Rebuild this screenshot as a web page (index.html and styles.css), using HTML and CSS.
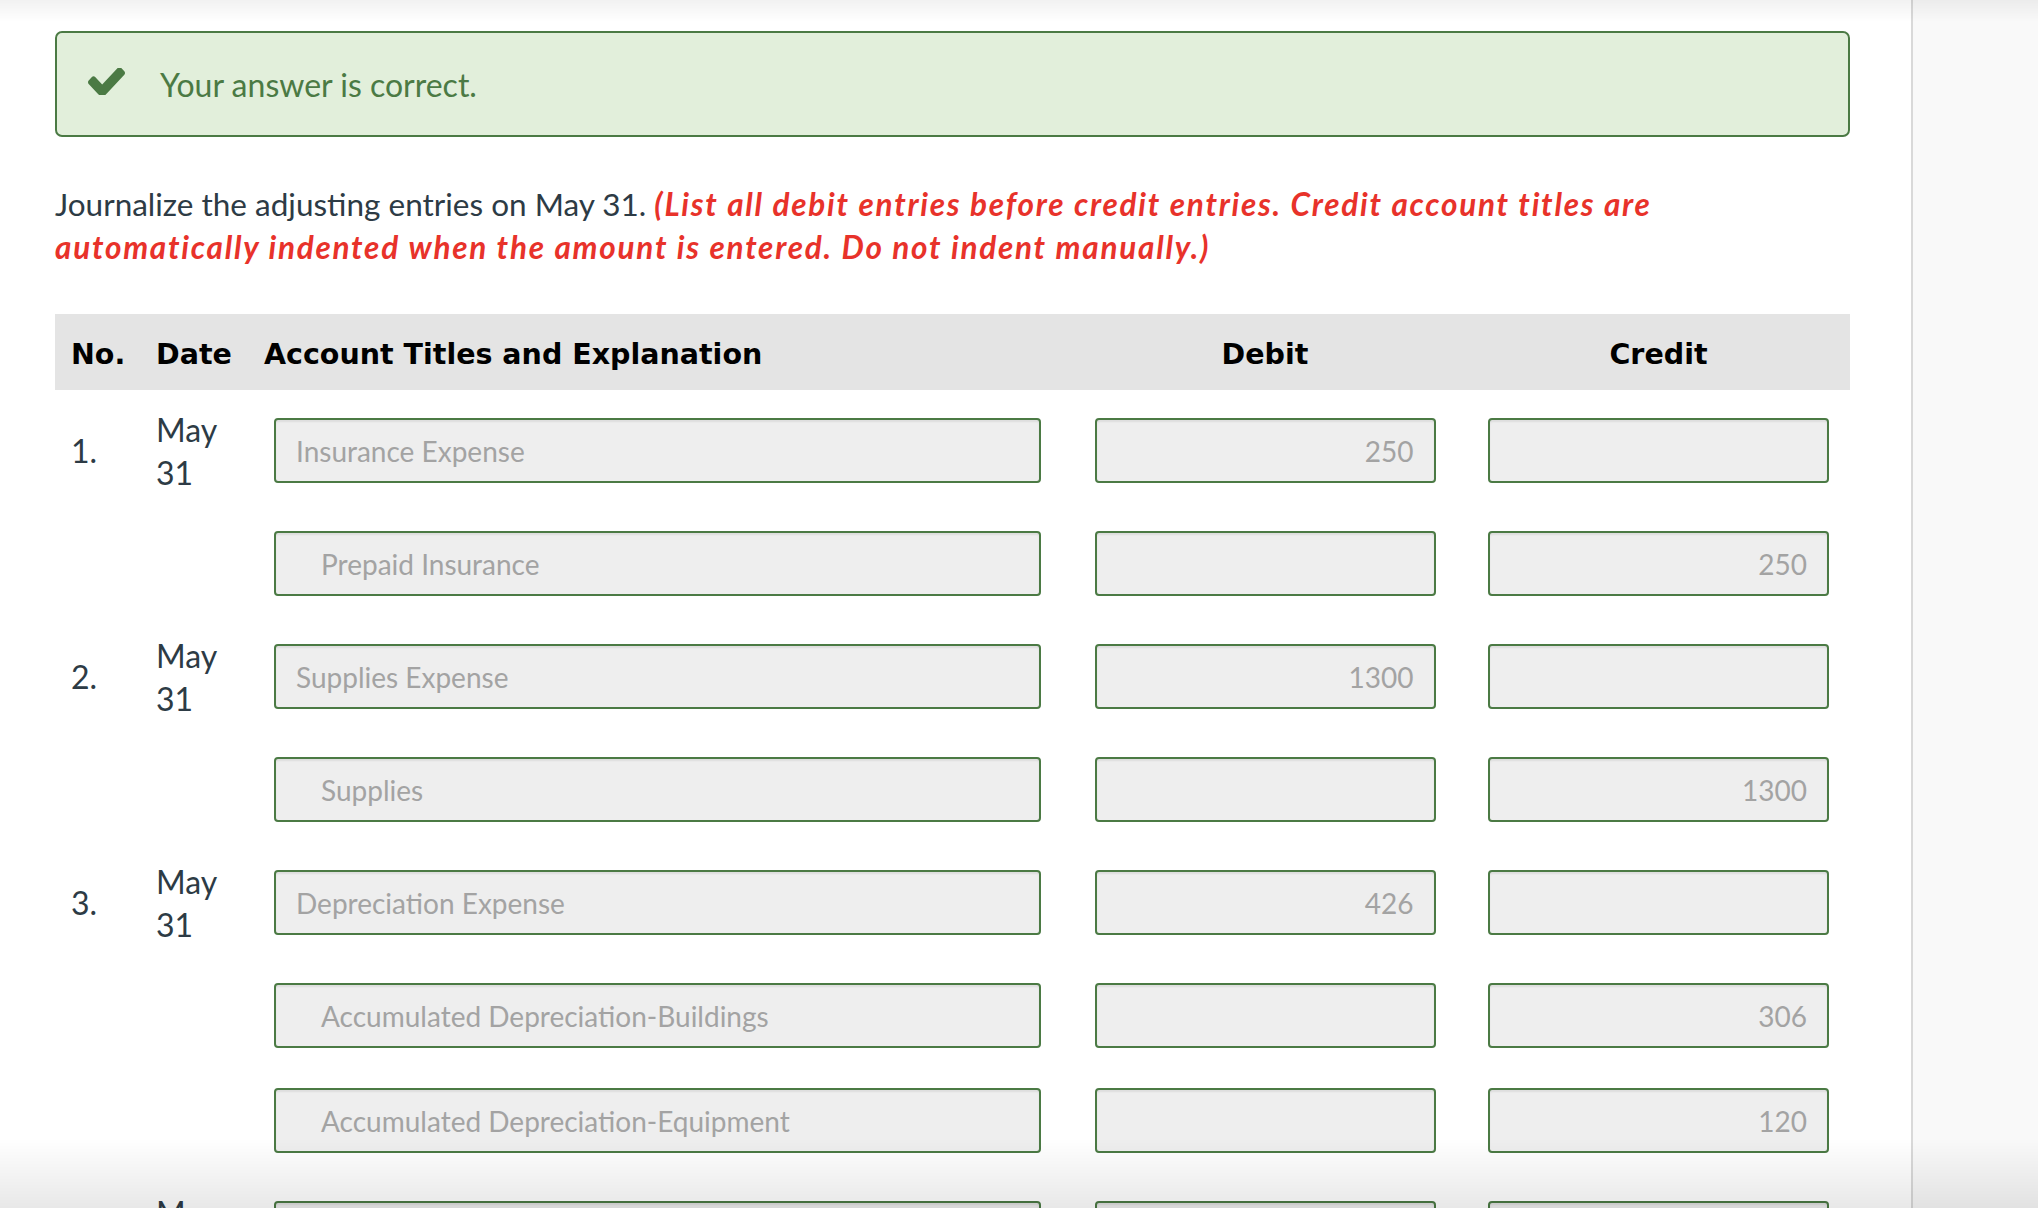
FILE: index.html
```html
<!DOCTYPE html>
<html lang="en">
<head>
<meta charset="utf-8">
<title>Journal entries</title>
<link rel="stylesheet" href="styles.css">
</head>
<body>
<div class="page">
  <main class="main">
    <div class="alert">
      <svg class="check" viewBox="121 370 1550 1060" preserveAspectRatio="none" aria-hidden="true">
        <path d="M1671 566q0 40-28 68l-724 724-136 136q-28 28-68 28t-68-28l-136-136-362-362q-28-28-28-68t28-68l136-136q28-28 68-28t68 28l294 295 656-657q28-28 68-28t68 28l136 136q28 28 28 68z"/>
      </svg>
      <span class="alert-text">Your answer is correct.</span>
    </div>

    <p class="instructions">Journalize the adjusting entries on May 31. <em class="hint">(List all debit entries before credit entries. Credit account titles are automatically indented when the amount is entered. Do not indent manually.)</em></p>

    <div class="journal">
      <div class="head">
        <div class="hc">No.</div>
        <div class="hc">Date</div>
        <div class="hc">Account Titles and Explanation</div>
        <div class="hc center">Debit</div>
        <div class="hc center">Credit</div>
      </div>

      <div class="line dated">
        <div class="no">1.</div>
        <div class="date">May<br>31</div>
        <div class="cell acct"><div class="field">Insurance Expense</div></div>
        <div class="cell amt"><div class="field num">250</div></div>
        <div class="cell amt"><div class="field num"></div></div>
      </div>
      <div class="line">
        <div class="no"></div>
        <div class="date"></div>
        <div class="cell acct"><div class="field indent">Prepaid Insurance</div></div>
        <div class="cell amt"><div class="field num"></div></div>
        <div class="cell amt"><div class="field num">250</div></div>
      </div>

      <div class="line dated">
        <div class="no">2.</div>
        <div class="date">May<br>31</div>
        <div class="cell acct"><div class="field">Supplies Expense</div></div>
        <div class="cell amt"><div class="field num">1300</div></div>
        <div class="cell amt"><div class="field num"></div></div>
      </div>
      <div class="line">
        <div class="no"></div>
        <div class="date"></div>
        <div class="cell acct"><div class="field indent">Supplies</div></div>
        <div class="cell amt"><div class="field num"></div></div>
        <div class="cell amt"><div class="field num">1300</div></div>
      </div>

      <div class="line dated">
        <div class="no">3.</div>
        <div class="date">May<br>31</div>
        <div class="cell acct"><div class="field">Depreciation Expense</div></div>
        <div class="cell amt"><div class="field num">426</div></div>
        <div class="cell amt"><div class="field num"></div></div>
      </div>
      <div class="line">
        <div class="no"></div>
        <div class="date"></div>
        <div class="cell acct"><div class="field indent">Accumulated Depreciation-Buildings</div></div>
        <div class="cell amt"><div class="field num"></div></div>
        <div class="cell amt"><div class="field num">306</div></div>
      </div>
      <div class="line">
        <div class="no"></div>
        <div class="date"></div>
        <div class="cell acct"><div class="field indent">Accumulated Depreciation-Equipment</div></div>
        <div class="cell amt"><div class="field num"></div></div>
        <div class="cell amt"><div class="field num">120</div></div>
      </div>

      <div class="line dated">
        <div class="no">4.</div>
        <div class="date">May<br>31</div>
        <div class="cell acct"><div class="field">Salaries and Wages Expense</div></div>
        <div class="cell amt"><div class="field num"></div></div>
        <div class="cell amt"><div class="field num"></div></div>
      </div>
    </div>
  </main>
  <aside class="sidebar"></aside>
</div>
<div class="shade-top"></div>
<div class="shade-bottom"></div>
</body>
</html>
```

FILE: styles.css
```css
html, body {
  margin: 0;
  padding: 0;
  height: 100%;
  overflow: hidden;
  background: #ffffff;
}

body {
  font-family: Lato, "Open Sans", sans-serif;
  color: #2d3b45;
}

.page {
  display: flex;
  min-height: 100%;
}

.main {
  width: 1911px;
  flex: none;
  box-sizing: border-box;
  padding: 31px 61px 0 55px;
}

.sidebar {
  flex: 1;
  background: #f9f9f9;
  border-left: 2px solid #d9d9d9;
}

.alert {
  box-sizing: border-box;
  height: 106px;
  border: 2px solid #4b7a44;
  border-radius: 7px;
  background: #e2efdb;
  display: flex;
  align-items: center;
  padding-left: 31px;
}

.check {
  width: 37px;
  height: 27px;
  fill: #4b7a44;
  flex: none;
  margin-top: -6px;
}

.alert-text {
  margin-left: 35px;
  font-size: 32px;
  color: #4b7a44;
}

.instructions {
  margin: 46px 0 0 0;
  font-size: 31.5px;
  line-height: 43px;
  color: #2d3b45;
}

.hint {
  font-style: italic;
  font-weight: 700;
  font-size: 31.5px;
  letter-spacing: 1.75px;
  color: #e8322a;
}

.journal {
  margin-top: 45px;
}

.head,
.line {
  display: grid;
  grid-template-columns: 85px 108px 815px 404px 383px;
  align-items: center;
}

.head {
  height: 76px;
  background: #e4e4e4;
}

.hc {
  font-family: "DejaVu Sans", Verdana, sans-serif;
  font-weight: 700;
  font-size: 28.5px;
  color: #000;
  padding-left: 16px;
  padding-top: 4px;
}

.hc.center {
  padding-left: 0;
  text-align: center;
}

.line {
  height: 105px;
}

.line.dated {
  height: 121px;
}

.no,
.date {
  font-size: 32px;
  line-height: 43px;
  color: #2d3b45;
  padding-left: 16px;
}

.cell {
  display: flex;
}

.cell.acct {
  padding-left: 26px;
}

.cell.amt {
  justify-content: center;
}

.field {
  box-sizing: border-box;
  height: 65px;
  border: 2px solid #4b7a44;
  border-radius: 4px;
  background: #eeeeee;
  box-shadow: inset 0 2px 2px rgba(0, 0, 0, 0.07);
  font-size: 28px;
  line-height: 62px;
  color: #a3a3a3;
  padding: 0 20px;
  white-space: nowrap;
  overflow: hidden;
}

.acct .field {
  width: 767px;
}

.amt .field {
  width: 341px;
}

.field.indent {
  padding-left: 45px;
}

.field.num {
  text-align: right;
}

.shade-top {
  position: fixed;
  left: 0;
  right: 0;
  top: 0;
  height: 22px;
  background: linear-gradient(rgba(0, 0, 0, 0.05), rgba(0, 0, 0, 0));
  pointer-events: none;
}

.shade-bottom {
  position: fixed;
  left: 0;
  right: 0;
  bottom: 0;
  height: 70px;
  background: linear-gradient(rgba(0, 0, 0, 0), rgba(0, 0, 0, 0.09));
  pointer-events: none;
}
```
